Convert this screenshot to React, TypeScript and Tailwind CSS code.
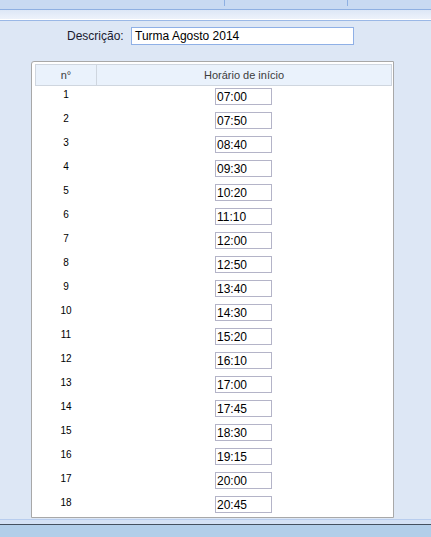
import React from "react";

const times = [
  "07:00", "07:50", "08:40", "09:30", "10:20", "11:10", "12:00", "12:50", "13:40",
  "14:30", "15:20", "16:10", "17:00", "17:45", "18:30", "19:15", "20:00", "20:45",
];

export default function App() {
  return (
    <div
      className="w-[431px] h-[537px] bg-[#dde7f5] flex flex-col overflow-hidden text-black"
      style={{ fontFamily: '"Liberation Sans", Arial, sans-serif' }}
    >
      {/* top band */}
      <div className="h-[9px] bg-[#c8daf2] shrink-0">
        <div className="flex h-[6px]">
          <div className="w-[224px]" />
          <div className="w-[123px] border-l border-[#8eb0e2]" />
          <div className="flex-1 border-l border-[#8eb0e2]" />
        </div>
      </div>
      <div className="h-px bg-[#8eb0e2] shrink-0" />
      <div className="h-[9px] bg-gradient-to-b from-[#dde7f6] to-[#edf2fb] shrink-0" />
      <div className="h-px bg-white shrink-0" />
      <div className="h-px bg-[#9ab8e6] shrink-0" />

      {/* content */}
      <div className="flex-1 flex flex-col pt-[6px] min-h-0">
        <div className="flex items-center h-[18px] shrink-0">
          <span className="ml-[67px] w-[64px] text-[12px] text-[#1a1a2e]">Descrição:</span>
          <div className="w-[223px] h-[18px] border border-[#8fb0e6] bg-white flex items-center px-[3px] text-[12px]">
            Turma Agosto 2014
          </div>
        </div>

        <div className="mt-[16px] ml-[31px] w-[363px] flex-1 min-h-0 border border-[#a8a8a8] rounded-tl-[3px] bg-white pl-[3px] pr-px pt-[2px] overflow-hidden">
          <div className="flex h-[22px] border border-[#cfd6df] bg-[#eaf2fc] text-[11px] text-[#3c3c3c]">
            <div className="w-[61px] flex items-center justify-center border-r border-[#cfd6df]">n°</div>
            <div className="flex-1 flex items-center justify-center">Horário de início</div>
          </div>
          {times.map((t, i) => (
            <div key={t} className="flex h-[24px]">
              <div className="w-[62px] text-center text-[10px] leading-[13px] pt-[2px]">{i + 1}</div>
              <div className="flex-1 flex justify-center pt-[2px] pr-[2px]">
                <div className="w-[57px] h-[17px] border border-[#b4b4c8] bg-white flex items-center px-[1px] text-[12px] leading-none">
                  {t}
                </div>
              </div>
            </div>
          ))}
        </div>

        <div className="h-px shrink-0" />
      </div>

      {/* bottom */}
      <div className="h-px bg-[#b8cdee] shrink-0" />
      <div className="h-[4px] bg-[#d4e1f4] shrink-0" />
      <div className="h-px bg-[#44505f] shrink-0" />
      <div className="h-[12px] bg-[#b2cee9] shrink-0" />
    </div>
  );
}
